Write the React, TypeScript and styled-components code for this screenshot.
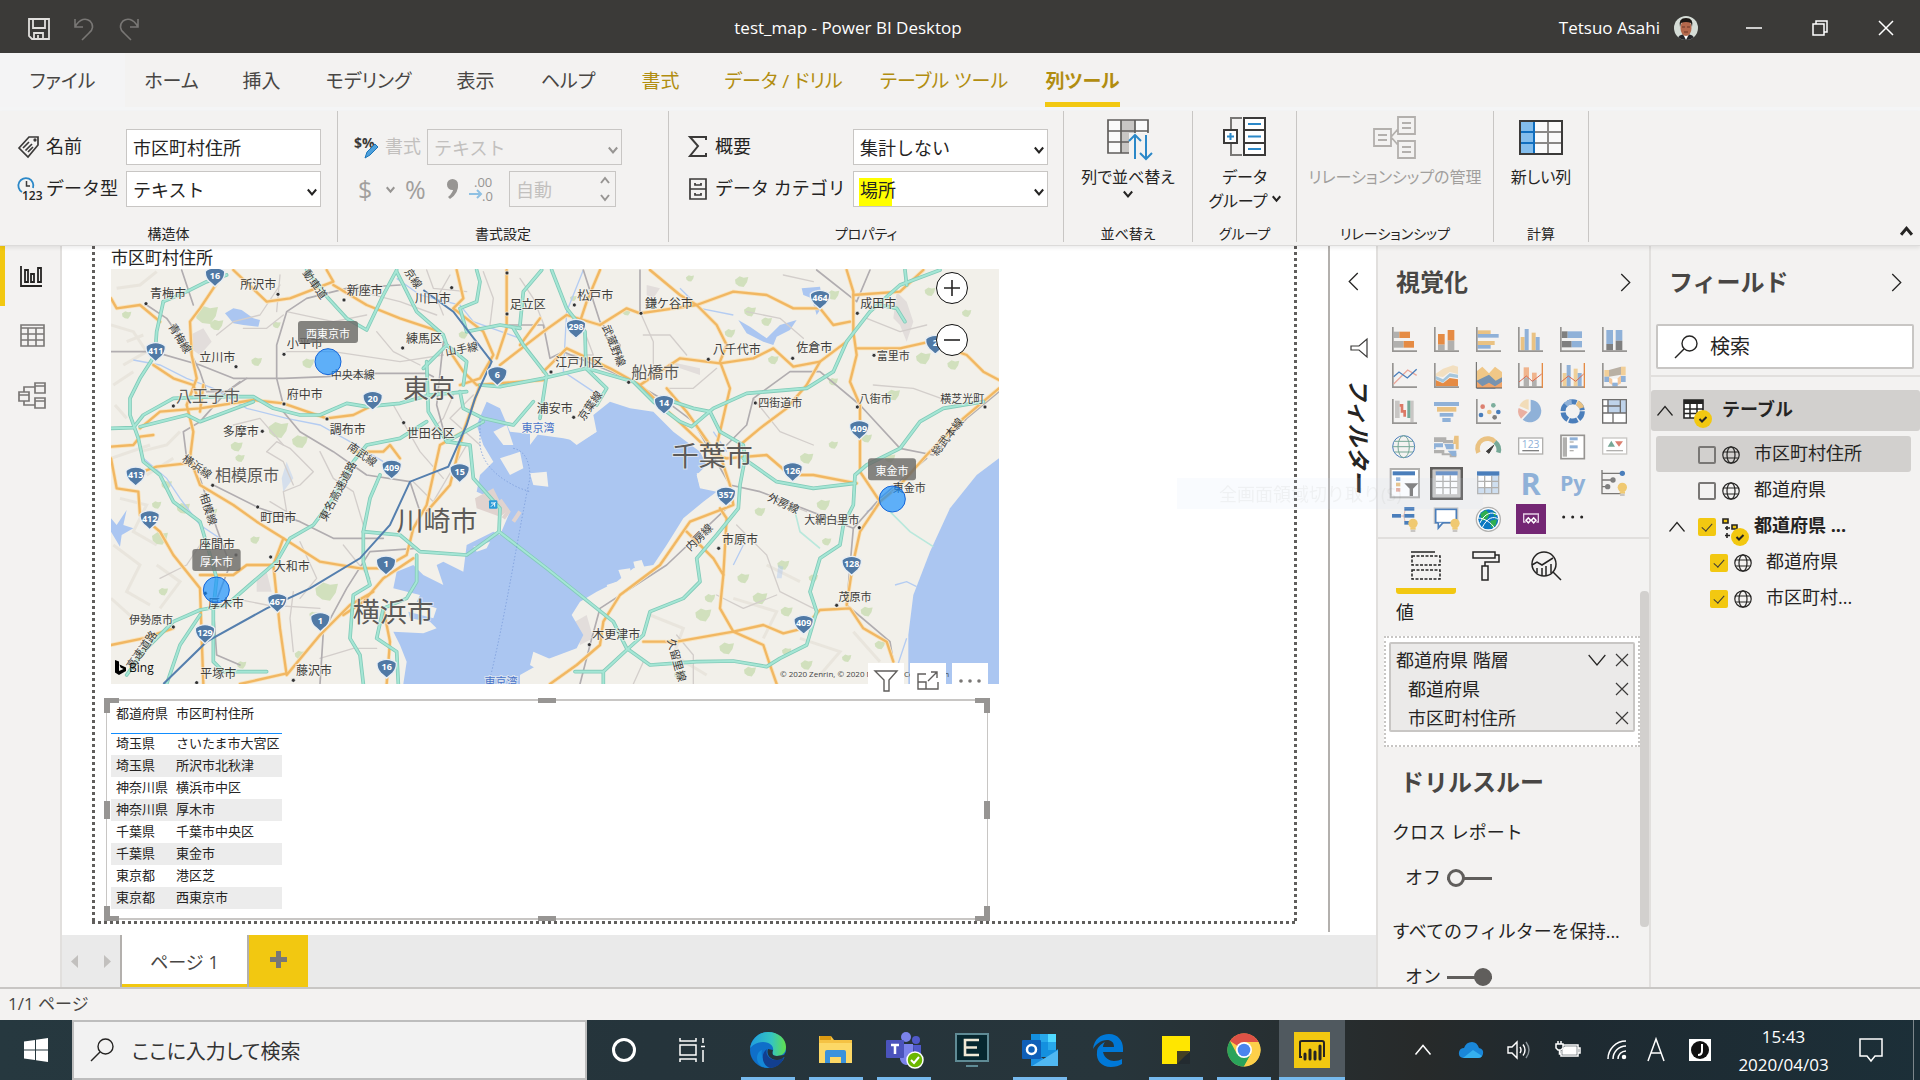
import React from "react";
import styled, { createGlobalStyle, css } from "styled-components";

const Global = createGlobalStyle`
  *, *::after { box-sizing: border-box; }
  html, body { margin: 0; }
  body, button, input, select {
    font-family: "Open Sans", "Noto Sans CJK JP", sans-serif;
    color: #252423;
  }
  button { border: 0; padding: 0; background: none; cursor: pointer; }
  svg { display: block; flex: none; overflow: visible; }
`;

const kana = css`font-feature-settings: "palt";`;

/* ---------- shell ---------- */
const Shell = styled.div`
  display: flex;
  flex-direction: column;
  height: 100vh;
  background: #f3f2f1;
  font-size: 18px;
  overflow: hidden;
`;

const TitleBar = styled.header`
  display: grid;
  grid-template-columns: 1fr auto 1fr;
  align-items: center;
  height: 53px;
  flex: none;
  padding-top: 2px;
  background: #3b3a38;
`;
const TitleText = styled.h1`
  margin: 0;
  padding-right: 224px;
  color: #fff;
  font-size: 17px;
  font-weight: 400;
  line-height: 24px;
`;
const QuickActions = styled.div`
  display: flex;
  gap: 21px;
  padding: 3px 0 0 27px;
`;
const WindowArea = styled.div`
  display: flex;
  align-items: center;
  justify-content: flex-end;
  margin-left: -224px;
`;
const UserName = styled.span`
  color: #fff;
  font-size: 17px;
  line-height: 24px;
  margin-right: 14px;
`;
const WinButton = styled.button`
  display: grid;
  place-items: center;
  width: 66px;
  height: 51px;
`;
const WinButtons = styled.div`
  display: flex;
  margin: 0 1px 0 23px;
`;

const TabBar = styled.nav`
  display: flex;
  height: 58px;
  flex: none;
  border-bottom: 4px solid #f4f5f6;
`;
const RibbonTab = styled.button<{ $w: number; $tone?: "tool" | "active" | "file" }>`
  ${kana}
  display: flex;
  justify-content: center;
  width: ${(p) => p.$w}px;
  padding-top: 13px;
  font-size: 19px;
  line-height: 30px;
  color: ${(p) => (p.$tone === "tool" || p.$tone === "active" ? "#b18d10" : "#484644")};
  font-weight: ${(p) => (p.$tone === "active" ? 700 : 400)};
  background: ${(p) => (p.$tone === "file" ? "#f4f4f5" : "transparent")};
  span {
    height: 41px;
    border-bottom: 5px solid ${(p) => (p.$tone === "active" ? "#f2c811" : "transparent")};
  }
`;

const Ribbon = styled.section`
  display: flex;
  height: 135px;
  flex: none;
  padding-bottom: 3px;
  border-bottom: 1px solid #dcdbda;
  box-shadow: 0 2px 4px rgba(0, 0, 0, 0.08);
  position: relative;
  z-index: 2;
  background: #f3f2f1;
`;
const Group = styled.div<{ $w: number }>`
  display: flex;
  flex-direction: column;
  justify-content: space-between;
  width: ${(p) => p.$w}px;
  border-right: 1px solid #c8c6c4;
`;
const GroupLabel = styled.div`
  ${kana}
  text-align: center;
  font-size: 14px;
  line-height: 16px;
`;
const FieldRows = styled.div<{ $cols: string; $pl: number }>`
  display: grid;
  grid-template-columns: ${(p) => p.$cols};
  grid-auto-rows: 36px;
  row-gap: 6px;
  align-items: center;
  padding: 18px 0 0 ${(p) => p.$pl}px;
`;
const FieldLabel = styled.label<{ $off?: boolean }>`
  font-size: 18px;
  line-height: 24px;
  padding-bottom: 3px;
  white-space: nowrap;
  color: ${(p) => (p.$off ? "#c2c0be" : "#252423")};
`;
const boxCss = css`
  width: 100%;
  height: 36px;
  margin: 0;
  padding: 2px 6px 0;
  border: 1px solid #c8c6c4;
  border-radius: 0;
  background: #fff;
  font-size: 18px;
  line-height: 28px;
  appearance: none;
  &:disabled { background: #f3f2f1; color: #c2c0be; opacity: 1; }
`;
const TextBox = styled.input`
  ${boxCss}
  padding-top: 0;
`;
const SelectBox = styled.select<{ $marked?: boolean }>`
  ${boxCss}
  ${(p) => p.$marked && css`background: linear-gradient(#ff0, #ff0) 5px 6px / 33px 28px no-repeat, #fff;`}
`;
const SelectWrap = styled.div`
  position: relative;
  svg { position: absolute; right: 4px; top: 16px; pointer-events: none; }
`;
const SpinWrap = styled.div`
  position: relative;
  svg { position: absolute; right: 6px; top: 6px; pointer-events: none; }
`;
const FormatTools = styled.div`
  grid-column: 1 / -1;
  display: grid;
  grid-template-columns: 22px 13px 36px 16px 34px 107px;
  column-gap: 6px;
  align-items: center;
  padding-left: 4px;
  color: #a19f9d;
  button { color: #a19f9d; font-size: 25px; line-height: 36px; text-align: left; }
`;
const BigButton = styled.button<{ $off?: boolean }>`
  ${kana}
  display: flex;
  flex-direction: column;
  align-items: center;
  padding-top: 4px;
  font-size: 16px;
  line-height: 24px;
  color: ${(p) => (p.$off ? "#a19f9d" : "#252423")};
  svg:first-child { margin-bottom: 6px; }
`;
const InlineRow = styled.span`
  display: flex;
  align-items: center;
  gap: 4px;
`;
const Collapse = styled.button`
  margin: auto 7px 4px auto;
`;

const Body = styled.main`
  display: flex;
  flex: 1;
  min-height: 0;
  border-bottom: 2px solid #c8c6c4;
`;
const SideNav = styled.nav`
  width: 62px;
  flex: none;
  border-right: 2px solid #e1dfdd;
`;
const SideButton = styled.button<{ $on?: boolean }>`
  display: grid;
  place-items: center start;
  width: 100%;
  height: 60px;
  padding-left: ${(p) => (p.$on ? 13 : 18)}px;
  border-left: ${(p) => (p.$on ? "5px solid #f2c811" : "0")};
`;
const Center = styled.div`
  display: flex;
  flex-direction: column;
  flex: 1;
  min-width: 0;
`;
const CanvasRow = styled.div`
  display: flex;
  flex: 1;
  min-height: 0;
  background: #fff;
`;
const dash = "#605e5c 0 3px, transparent 3px 6px";
const ReportPage = styled.section`
  flex: 1;
  margin: 0 31px 11px 30px;
  padding: 0 0 3px 12px;
  background:
    repeating-linear-gradient(to bottom, ${dash}) left top / 3px 100% no-repeat,
    repeating-linear-gradient(to bottom, ${dash}) right top / 3px 100% no-repeat,
    repeating-linear-gradient(to right, ${dash}) left bottom / 100% 3px no-repeat;
`;
const VisualTitle = styled.h2`
  margin: 0 0 0 7px;
  height: 23px;
  font-size: 17px;
  font-weight: 400;
  line-height: 24px;
`;
const MapVisual = styled.div`
  position: relative;
  width: 888px;
  height: 415px;
  margin-left: 7px;
  > svg { overflow: hidden; }
`;
const ZoomStack = styled.div`
  position: absolute;
  right: 31px;
  top: 3px;
  display: flex;
  flex-direction: column;
  gap: 20px;
`;
const ZoomButton = styled.button`
  display: grid;
  place-items: center;
  width: 32px;
  height: 32px;
  border: 1px solid #111;
  border-radius: 50%;
  background: #fff;
`;
const VisualHeader = styled.div`
  position: absolute;
  right: 11px;
  top: 394px;
  display: flex;
  gap: 6px;
`;
const HeaderButton = styled.button`
  display: grid;
  place-items: center;
  width: 36px;
  height: 36px;
  background: #fff;
`;
const TableVisual = styled.div`
  position: relative;
  width: 886px;
  height: 223px;
  margin-top: 14px;
  padding: 5px 0 0 7px;
  background: linear-gradient(#fff, #fff) 3px 3px / 880px 217px no-repeat, linear-gradient(#c8c6c4, #c8c6c4) 2px 1px / 882px 221px no-repeat;
`;
const Handle = styled.i<{ $v: "top" | "bottom" | "mid"; $h: "left" | "right" | "mid" }>`
  position: absolute;
  width: ${(p) => (p.$v === "mid" ? 6 : p.$h === "mid" ? 18 : 15)}px;
  height: ${(p) => (p.$h === "mid" ? 5 : p.$v === "mid" ? 18 : 15)}px;
  ${(p) => (p.$v === "mid" ? "top: 103px;" : `${p.$v}: 0;`)}
  ${(p) => (p.$h === "mid" ? "left: 434px;" : `${p.$h}: 0;`)}
  border: 0 solid #979593;
  ${(p) => (p.$v === "mid" || p.$h === "mid" ? "background: #979593;" : `border-${p.$v}-width: 5px; border-${p.$h}-width: 6px;`)}
`;
const DataTable = styled.table`
  border-collapse: collapse;
  table-layout: fixed;
  width: 171px;
  font-size: 13px;
  line-height: 18px;
  th { height: 30px; padding: 1px 5px 0; vertical-align: top; text-align: left; font-weight: 400; white-space: nowrap; border-bottom: 1px solid #118dff; }
  td { height: 22px; padding: 0 5px 2px; white-space: nowrap; }
  tbody tr:nth-child(even) td { background: #ececec; }
  th:first-child { width: 60px; }
`;

const FilterPane = styled.aside`
  display: flex;
  flex-direction: column;
  align-items: center;
  width: 48px;
  margin-bottom: 3px;
  border-left: 2px solid #b3b0ad;
  padding-top: 27px;
`;
const FilterBody = styled.div`
  display: flex;
  flex-direction: column;
  align-items: center;
  gap: 20px;
  padding: 48px 0 0 12px;
`;
const FilterTitle = styled.h2`
  writing-mode: vertical-rl;
  text-orientation: sideways;
  margin: 0;
  font-size: 23px;
  line-height: 28px;
  font-style: oblique;
  font-weight: 700;
`;

const PageTabs = styled.nav`
  display: flex;
  height: 52px;
  flex: none;
  background: #eaeaea;
`;
const PageArrows = styled.div`
  display: flex;
  align-items: center;
  gap: 26px;
  width: 58px;
  padding-left: 9px;
`;
const PageTab = styled.button`
  width: 129px;
  border: solid #b3b0ad;
  border-width: 0 2px;
  background: linear-gradient(#f2c811, #f2c811) bottom / 100% 3px no-repeat, #fff;
  color: #484644;
  font-size: 18px;
`;
const AddPage = styled.button`
  display: grid;
  place-items: center;
  width: 59px;
  padding-bottom: 3px;
  background: #f2c811;
`;

/* ---------- right panes ---------- */
const Pane = styled.aside<{ $w: number }>`
  position: relative;
  width: ${(p) => p.$w}px;
  flex: none;
  border-left: 2px solid #e1dfdd;
  overflow: hidden;
`;
const PaneHead = styled.div`
  display: flex;
  align-items: center;
  justify-content: space-between;
  height: 74px;
  padding: 0 15px 2px 18px;
`;
const PaneTitle = styled.h2`
  margin: 0;
  font-size: 24px;
  line-height: 32px;
  font-weight: 700;
  color: #484644;
`;
const VizGrid = styled.div`
  display: grid;
  grid-template-columns: repeat(6, 42px);
  grid-auto-rows: 36px;
  height: 219px;
  padding: 6px 0 0 13px;
  border-bottom: 2px solid #e1dfdd;
`;
const VizButton = styled.button`
  width: 28px;
  height: 28px;
`;
const BuildTabs = styled.div`
  display: flex;
  padding: 12px 0 0 18px;
`;
const BuildTab = styled.button<{ $on?: boolean }>`
  display: flex;
  justify-content: center;
  width: 60px;
  height: 43px;
  border-radius: 3px;
  background: ${(p) => (p.$on ? "linear-gradient(#f2c811, #f2c811) bottom / 100% 6px no-repeat" : "none")};
`;
const WellLabel = styled.h3`
  margin: 5px 0 10px 18px;
  font-size: 18px;
  font-weight: 400;
  line-height: 27px;
`;
const Well = styled.div`
  width: 256px;
  height: 111px;
  margin-left: 6px;
  padding: 4px 3px;
  border: 2px dotted #c8c6c4;
  background: #fff;
`;
const WellBox = styled.ul`
  margin: 0;
  padding: 1px 5px 0;
  height: 90px;
  list-style: none;
  border: 2px solid #c8c6c4;
  border-radius: 2px;
  background: #ebeae9;
`;
const WellItem = styled.li<{ $sub?: boolean }>`
  display: flex;
  align-items: center;
  height: 29px;
  padding-left: ${(p) => (p.$sub ? 12 : 0)}px;
  font-size: 18px;
  line-height: 26px;
  span { flex: 1; }
  button { margin-left: 9px; }
`;
const DrillTitle = styled.h2`
  margin: 18px 0 0 22px;
  font-size: 24px;
  line-height: 34px;
  color: #484644;
`;
const PaneText = styled.p`
  margin: 19px 0 0 14px;
  font-size: 18px;
  line-height: 28px;
  white-space: nowrap;
`;
const ToggleRow = styled.label`
  display: flex;
  align-items: center;
  gap: 6px;
  margin: 17px 0 26px 27px;
  font-size: 18px;
  line-height: 28px;
`;
const Toggle = styled.input`
  appearance: none;
  position: relative;
  width: 45px;
  height: 18px;
  margin: 2px 0 0;
  background: linear-gradient(#605e5c, #605e5c) center / 100% 3px no-repeat;
  &::after {
    content: "";
    position: absolute;
    left: 0;
    width: 18px;
    height: 18px;
    border: 3px solid #605e5c;
    border-radius: 50%;
    background: #f3f2f1;
  }
  &:checked::after { left: 27px; background: #605e5c; }
`;
const ScrollThumb = styled.div`
  position: absolute;
  right: 0;
  top: 345px;
  width: 9px;
  height: 336px;
  border-radius: 4px;
  background: #d2d0ce;
`;
const SearchWrap = styled.label`
  display: flex;
  align-items: center;
  gap: 12px;
  height: 45px;
  margin: 4px 6px 6px 5px;
  padding-left: 16px;
  border: 2px solid #c8c6c4;
  border-radius: 2px;
  background: #fff;
`;
const SearchInput = styled.input`
  flex: 1;
  min-width: 0;
  padding: 0;
  border: 0;
  background: none;
  font-size: 20px;
  line-height: 28px;
  &::placeholder { color: #252423; opacity: 1; }
`;
const Tree = styled.div`
  border-top: 2px solid #e1dfdd;
  padding-top: 13px;
`;
const TableRow = styled.div`
  display: flex;
  align-items: center;
  height: 41px;
  margin-bottom: 5px;
  padding-left: 5px;
  border-radius: 3px;
  background: #d2d0ce;
  font-weight: 700;
  svg + svg { margin: 6px 10px 0 9px; }
  span { padding-bottom: 5px; }
`;
const FieldRow = styled.label<{ $level: 0 | 1; $on?: boolean; $bold?: boolean }>`
  display: flex;
  align-items: center;
  gap: 6px;
  height: 36px;
  margin: 0 9px 0 5px;
  padding-left: ${(p) => (p.$bold ? 12 : p.$level ? 54 : 42)}px;
  border-radius: 3px;
  background: ${(p) => (p.$on ? "#d2d0ce" : "transparent")};
  font-weight: ${(p) => (p.$bold ? 700 : 400)};
  line-height: 26px;
  span { padding: 0 0 3px 8px; }
  svg { margin-top: 2px; }
  > svg:first-child { margin-right: 6px; }
`;
const Check = styled.input`
  appearance: none;
  position: relative;
  flex: none;
  width: 18px;
  height: 18px;
  margin: 2px 0 0;
  border: 2px solid #797775;
  border-radius: 2px;
  &:checked { border-color: #f2c811; background: #f2c811; }
  &:checked::after {
    content: "";
    position: absolute;
    left: 4px;
    top: 1px;
    width: 6px;
    height: 10px;
    border: solid #3b3a39;
    border-width: 0 1px 1px 0;
    transform: rotate(42deg);
  }
`;
const SnipHint = styled.div`
  position: fixed;
  left: 1177px;
  top: 478px;
  width: 306px;
  height: 31px;
  padding-left: 42px;
  background: rgba(205, 225, 250, 0.12);
  color: rgba(90, 80, 70, 0.06);
  font-size: 18px;
  line-height: 32px;
  white-space: nowrap;
  pointer-events: none;
`;

const StatusBar = styled.footer`
  height: 31px;
  flex: none;
  padding-left: 8px;
  color: #484644;
  font-size: 17px;
  line-height: 29px;
`;

/* ---------- taskbar ---------- */
const Taskbar = styled.footer`
  display: flex;
  height: 60px;
  flex: none;
  background: linear-gradient(90deg, #26383f 0, #25343b 34%, #27353b 58%, #272a2a 74%, #1e2a31 82%, #1c2f38 100%);
`;
const StartButton = styled.button`
  display: grid;
  place-items: center;
  width: 72px;
`;
const TaskSearch = styled.label`
  display: flex;
  align-items: center;
  gap: 18px;
  width: 515px;
  margin-right: 3px;
  padding-left: 16px;
  border: 2px solid #bdbdbd;
  background: #f2f2f2;
  input { ${kana} padding-top: 3px; }
  input::placeholder { color: #333; }
`;
const TaskButton = styled.button<{ $open?: boolean; $active?: boolean; $gap?: boolean }>`
  display: grid;
  place-items: center;
  width: 68px;
  margin-left: ${(p) => (p.$gap ? 8 : 0)}px;
  background:
    ${(p) => (p.$open || p.$active ? `linear-gradient(#76b9ed, #76b9ed) bottom / ${p.$active ? 66 : 54}px 3px no-repeat` : "none")}
    ${(p) => (p.$active ? ", linear-gradient(#50595f, #50595f) center / 66px 100% no-repeat" : "")};
`;
const Tray = styled.div`
  display: flex;
  align-items: center;
  margin-left: auto;
  color: #fff;
`;
const TrayButton = styled.button<{ $w: number }>`
  display: grid;
  place-items: center;
  width: ${(p) => p.$w}px;
  height: 60px;
  color: #fff;
`;
const Clock = styled.time`
  width: 111px;
  padding-top: 2px;
  text-align: center;
  font-size: 17px;
  line-height: 28px;
`;
const Edge = styled.i`
  height: 60px;
  width: 7px;
  margin-left: 11px;
  border-left: 1px solid #7c868b;
`;

/* ---------- small glyphs ---------- */
const Chev = ({ d = "down", w = 10, c = "#252423", s = 2 }: { d?: string; w?: number; c?: string; s?: number }) => {
  const paths: Record<string, string> = {
    down: "M1 3 L6 9 L11 3",
    up: "M1 9 L6 3 L11 9",
    left: "M9 0 L3 6 L9 12",
    right: "M3 0 L9 6 L3 12",
  };
  return (
    <svg width={w} height={w} viewBox="0 0 12 12" fill="none" stroke={c} strokeWidth={(s * 12) / w}>
      <path d={paths[d]} />
    </svg>
  );
};
const Cross = () => (
  <svg width="12" height="12" viewBox="0 0 12 12" stroke="#3b3a39" strokeWidth="1.2"><path d="M0 0 12 12M12 0 0 12" /></svg>
);
const Magnifier = ({ size = 24 }: { size?: number }) => (
  <svg width={size} height={size} viewBox="0 0 24 24" fill="none" stroke="#252423" strokeWidth="1.4"><circle cx="15.5" cy="8.5" r="7.5" /><path d="M10 14 1 23" /></svg>
);
const Globe = () => (
  <svg width="18" height="18" viewBox="0 0 18 18" fill="none" stroke="#252423" strokeWidth="1.2">
    <circle cx="9" cy="9" r="8.2" /><ellipse cx="9" cy="9" rx="4" ry="8.2" /><path d="M1.5 6h15M1.5 12h15" />
  </svg>
);

/* ---------- visualization gallery ---------- */
const B = "#8fb1d8", D = "#4a7ebb", Y = "#eac282", O = "#e58b44", G = "#b1b0ae", K = "#7f7f7f";
const Axis = () => <path d="M5.5 3V75.5H78" fill="none" stroke="#979593" strokeWidth="5" />;
const R = ({ x, y, w, h, f }: { x: number; y: number; w: number; h: number; f: string }) => <rect x={x} y={y} width={w} height={h} fill={f} />;
const Bulb = ({ x, y }: { x: number; y: number }) => (
  <g><circle cx={x} cy={y} r="14" fill="#f0c971" /><rect x={x - 8} y={y + 12} width="16" height="7" fill="#f0c971" /><rect x={x - 7} y={y + 19} width="14" height="7" fill="#c8c6c4" /></g>
);
const gallery: [string, React.ReactNode][] = [
  ["積み上げ横棒", <><R x={8} y={17} w={17} h={19} f={G} /><R x={25} y={17} w={32} h={19} f={O} /><R x={8} y={45} w={30} h={20} f={G} /><R x={38} y={45} w={31} h={20} f={O} /><Axis /></>],
  ["積み上げ縦棒", <><R x={15} y={24} w={20} h={32} f={O} /><R x={15} y={56} w={20} h={17} f={G} /><R x={44} y={12} w={20} h={32} f={O} /><R x={44} y={44} w={20} h={29} f={G} /><Axis /></>],
  ["集合横棒", <><R x={8} y={13} w={39} h={11} f={Y} /><R x={8} y={24} w={63} h={11} f={B} /><R x={8} y={45} w={51} h={12} f={Y} /><R x={8} y={57} w={39} h={11} f={B} /><Axis /></>],
  ["集合縦棒", <><R x={11} y={33} w={12} h={40} f={Y} /><R x={23} y={9} w={12} h={64} f={B} /><R x={44} y={20} w={12} h={53} f={Y} /><R x={56} y={33} w={12} h={40} f={B} /><Axis /></>],
  ["100% 横棒", <><R x={8} y={16} w={18} h={20} f={K} /><R x={26} y={16} w={43} h={20} f={B} /><R x={8} y={45} w={30} h={19} f={K} /><R x={38} y={45} w={31} h={19} f={B} /><Axis /></>],
  ["100% 縦棒", <><R x={16} y={12} w={20} h={42} f={B} /><R x={16} y={54} w={20} h={19} f={K} /><R x={44} y={12} w={20} h={32} f={B} /><R x={44} y={44} w={20} h={29} f={K} /><Axis /></>],
  ["折れ線", <><Axis /><path d="M8 66 50 24 77 40" fill="none" stroke="#e9a79a" strokeWidth="4" /><path d="M8 44 24 30 49 48 77 22" fill="none" stroke={D} strokeWidth="4" /></>],
  ["面", <><path d="M8 35 30 20 60 10 75 14V36L50 30 30 45 8 42Z" fill="#f2dfc0" /><path d="M8 42 30 52 50 34 75 38V48L50 44 30 62 8 52Z" fill="#a5c6dc" /><path d="M8 54 30 64 50 48 75 52V73H8Z" fill={O} /><Axis /></>],
  ["積み上げ面", <><path d="M5 28 22 14 42 34 60 14 81 30V73H5Z" fill="#f0c787" /><path d="M5 56 22 48 42 38 62 56 81 46V60L60 80H5Z" fill="#7793b0" /><path d="M5 58 22 73 42 62 60 73 81 60V78H5Z" fill="#f0a56a" /><path d="M4 0V78H81" fill="none" stroke="#605e5c" strokeWidth="3" /></>],
  ["折れ線と積み上げ縦棒", <><R x={20} y={16} w={16} h={30} f="#f0b48d" /><R x={20} y={46} w={16} h={27} f={G} /><R x={45} y={32} w={14} h={22} f="#f0b48d" /><R x={45} y={54} w={14} h={19} f={G} /><Axis /><path d="M76 3V78" stroke={O} strokeWidth="4" /><path d="M6 60 28 42 46 58 74 36" fill="none" stroke="#dc6a50" strokeWidth="3" /></>],
  ["折れ線と集合縦棒", <><R x={11} y={33} w={12} h={40} f="#f0cf98" /><R x={23} y={9} w={12} h={64} f={B} /><R x={44} y={20} w={12} h={53} f="#f0cf98" /><R x={56} y={33} w={12} h={40} f={B} /><Axis /><path d="M76 3V78" stroke={O} strokeWidth="4" /><path d="M6 60 28 42 50 58 74 36" fill="none" stroke="#dc6a50" strokeWidth="3" /></>],
  ["リボン", <><R x={10} y={24} w={14} h={20} f="#f2cf98" /><R x={10} y={44} w={14} h={16} f={B} /><path d="M24 24 60 14V38L24 44Z" fill="#b9b0a4" /><path d="M24 46 42 56 60 40V64L42 74 24 62Z" fill="#f5c89c" /><R x={34} y={50} w={16} h={14} f="#fff" /><R x={34} y={62} w={16} h={12} f={B} /><R x={60} y={14} w={14} h={26} f="#f2cf98" /><R x={60} y={42} w={14} h={18} f={B} /><Axis /></>],
  ["ウォーターフォール", <><R x={12} y={8} w={14} h={52} f="#c8c6c4" /><R x={58} y={8} w={10} h={64} f="#c8c6c4" /><path d="M26 22H33V40H41V56" fill="none" stroke="#dc7a66" strokeWidth="8" /><R x={49} y={8} w={9} h={52} f="#76a897" /><Axis /></>],
  ["じょうご", <><R x={3} y={12} w={75} h={12} f={B} /><R x={12} y={27} w={58} h={14} f={Y} /><R x={20} y={45} w={41} h={11} f={B} /><R x={28} y={60} w={25} h={12} f={B} /></>],
  ["散布図", <><Axis /><circle cx="23" cy="26" r="7" fill="#dc8070" /><circle cx="55" cy="22" r="7" fill="#7cae9d" /><circle cx="43" cy="42" r="7" fill={Y} /><circle cx="70" cy="42" r="7" fill={D} /><circle cx="18" cy="51" r="7" fill={D} /><circle cx="59" cy="58" r="7" fill={K} /></>],
  ["円", <><path d="M41 39V5A34 34 0 1 1 17 65Z" fill={B} /><path d="M35 36V4A32 32 0 0 0 7 24Z" fill="#f2dcb8" /><path d="M32 42 5 30A32 32 0 0 0 12 62Z" fill="#eab0a2" /></>],
  ["ドーナツ", <g fill="none" strokeWidth="15"><circle cx="41" cy="40" r="29" stroke={D} strokeDasharray="26 4.36" /><path d="M20 20A29 29 0 0 1 38 11" stroke={B} /><path d="M54 14A29 29 0 0 1 68 30" stroke={Y} /></g>],
  ["ツリーマップ", <><R x={5} y={5} w={72} h={70} f="#fff" /><R x={20} y={5} w={57} h={40} f="#bfd3ea" /><path d="M5 5H76V75H5ZM5 45H76M21 5V45M21 24H58V5M58 24V45M36 45V75M5 24H21" fill="none" stroke="#6f6e6d" strokeWidth="4" /></>],
  ["マップ", <g fill="none" strokeWidth="3"><circle cx="38" cy="38" r="33" stroke={D} /><ellipse cx="38" cy="38" rx="17" ry="33" stroke="#76a897" /><path d="M5 38H71M10 22H66M10 54H66" stroke="#76a897" /></g>],
  ["塗り分け地図", <><path d="M3 10H40V18H60V28H30V24H3Z" fill={G} /><path d="M3 28H30V40H8V46H3Z" fill={B} /><path d="M64 5H77V46H68V30H60Z" fill={Y} /><path d="M34 30H62V46H40Z" fill={B} /><path d="M3 48H34V58H70V70H50V64H26V58H3Z" fill={G} /><path d="M44 50H70V66H58Z" fill={B} /></>],
  ["ゲージ", <><path d="M10 56A30 30 0 0 1 60 24" fill="none" stroke={Y} strokeWidth="14" /><path d="M60 24A30 30 0 0 1 70 56" fill="none" stroke="#76a897" strokeWidth="14" /><path d="M34 52 56 34 42 58Z" fill="#3b3a39" stroke="#3b3a39" strokeWidth="3" /></>],
  ["カード", <><rect x="5" y="12" width="72" height="48" fill="#fff" stroke={G} strokeWidth="4" /><text x="41" y="41" fontSize="31" textAnchor="middle" fill={B}>123</text><R x={16} y={48} w={50} h={4} f={K} /></>],
  ["複数の行カード", <><rect x="6" y="4" width="70" height="70" fill="#fff" stroke="#979593" strokeWidth="5" /><R x={11} y={10} w={13} h={58} f={G} /><R x={32} y={10} w={24} h={9} f={B} /><R x={32} y={22} w={12} h={4} f={G} /><R x={32} y={34} w={24} h={9} f={B} /><R x={32} y={48} w={12} h={4} f={G} /></>],
  ["KPI", <><rect x="5" y="12" width="72" height="48" fill="#fff" stroke="#c8c6c4" strokeWidth="4" /><path d="M20 38 31 20 42 38Z" fill="#76a897" /><path d="M42 22H66L54 38Z" fill="#dc8070" /><R x={16} y={48} w={50} h={4} f={G} /></>],
  ["スライサー", <><rect x="-1" y="-3" width="85" height="85" fill="#fff" stroke={G} strokeWidth="6" /><R x={5} y={4} w={67} h={12} f={D} /><R x={15} y={22} w={13} h={11} f={B} /><R x={15} y={38} w={13} h={11} f={Y} /><R x={15} y={54} w={13} h={11} f="#eab0a2" /><path d="M40 40H82L66 56V78H56V56Z" fill="#797775" /></>],
  ["テーブル", <><rect x="-5" y="-5" width="91" height="91" fill="#fff" stroke="#605e5c" strokeWidth="8" /><rect x="4" y="4" width="73" height="73" fill="none" stroke="#c8c6c4" strokeWidth="9" /><R x={8} y={4} w={66} h={12} f="#6d94c8" /><path d="M8 34H74M8 53H74M30 16V73M52 16V73" stroke={G} strokeWidth="4" /></>],
  ["マトリックス", <><R x={7} y={5} w={65} h={67} f="#fff" /><R x={7} y={52} w={65} h={20} f="#cfdff0" /><R x={50} y={17} w={22} h={55} f="#cfdff0" /><path d="M8 17V71H71V17M8 34H71M8 53H71M29 17V71M50 17V71" stroke={G} strokeWidth="4" fill="none" /><R x={6} y={4} w={67} h={13} f={D} /></>],
  ["R スクリプト", <text x="41" y="76" fontSize="92" fontWeight="700" textAnchor="middle" fill={B}>R</text>],
  ["Python", <text x="41" y="62" fontSize="64" fontWeight="700" textAnchor="middle" fill={B}>Py</text>],
  ["主要なインフルエンサー", <><path d="M3 0V71H60M3 10H60M3 30H34M3 50H18" fill="none" stroke="#797775" strokeWidth="4" /><circle cx="64" cy="10" r="8" fill={D} /><circle cx="36" cy="30" r="8" fill={K} /><circle cx="20" cy="50" r="8" fill={K} /><Bulb x={64} y={52} /></>],
  ["分解ツリー", <><path d="M28 30H38M38 30C44 10 40 10 50 8M38 30C44 50 40 50 50 50" fill="none" stroke="#dcb7b0" strokeWidth="3" /><R x={3} y={24} w={27} h={11} f={D} /><R x={40} y={3} w={30} h={11} f={D} /><R x={40} y={24} w={30} h={11} f={D} /><R x={40} y={45} w={16} h={11} f={D} /><Bulb x={66} y={52} /></>],
  ["Q&A", <><rect x="2" y="4" width="74" height="50" fill="#c8c6c4" /><rect x="8" y="10" width="62" height="40" fill="#fff" stroke={D} strokeWidth="5" /><path d="M16 50V66L30 50" fill="#fff" stroke={D} strokeWidth="5" /><Bulb x={66} y={52} /></>],
  ["ArcGIS", <><circle cx="40" cy="40" r="36" fill="#fff" stroke={G} strokeWidth="4" /><circle cx="40" cy="40" r="30" fill="#0b78c2" /><path d="M16 24 32 12 44 24 36 40 22 44ZM46 44 66 40 62 58 48 66ZM54 14 64 26 58 32Z" fill="#2fae4f" /><path d="M14 52C30 20 50 16 66 26M22 64C36 36 56 28 70 40M10 36C26 36 50 50 58 66" stroke="#fff" strokeWidth="3" fill="none" /></>],
  ["Power Apps", <><rect x="-3" y="-6" width="90" height="90" fill="#742774" /><path d="M26 48H20V24H64V48H58" fill="none" stroke="#e5cfe5" strokeWidth="4" /><path d="M34 32 44 43 34 54 24 43ZM50 32 60 43 50 54 40 43Z" fill="#fff" /><path d="M34 39 38 43 34 47 30 43ZM50 39 54 43 50 47 46 43Z" fill="#742774" /></>],
  ["その他", <g fill="#252423"><circle cx="14" cy="33" r="4.5" /><circle cx="41" cy="33" r="4.5" /><circle cx="68" cy="33" r="4.5" /></g>],
];

/* ---------- map ---------- */
const teal = [
  "333,550 400,548 430,510 520,460 640,455 760,455 820,490 900,510 960,510 1040,475 1100,485 1200,475 1290,450 1400,440",
  "490,170 470,260 465,330 420,400 390,460 390,510 415,580 430,650 480,690 520,770 600,830 630,930 650,1000 640,1090",
  "490,170 560,140 620,110 680,90", "920,75 985,160 1040,220 1100,255 1150,150 1190,75",
  "380,1290 430,1220 520,1130 600,1095 680,1080 760,1010 830,950 870,880 940,840 1000,760 1060,650 1100,600 1200,580 1280,530",
  "1280,350 1285,500 1340,590 1410,600 1420,700 1500,790 1497,860 1640,970 1790,1090 1840,1130 1880,1210 1950,1260 2090,1250 2200,1248 2300,1265 2340,1240 2420,1200 2450,1100 2430,1040 2460,940 2520,900 2530,840 2560,780 2565,690 2600,660 2700,610 2760,530 2830,490 2950,470",
  "1540,250 1570,300 1640,390 1620,520", "1560,240 1570,140 1625,75", "1655,75 1700,190 1755,260 1758,370 1820,430 1790,480",
  "1440,420 1500,425 1630,400 1760,370 1900,410 1960,470 2040,530 2075,545 2140,490 2240,445 2420,430 2500,380 2540,290 2610,200 2700,120 2820,75",
  "2020,470 2080,490 2130,500 2160,560 2230,600 2235,640 2220,720 2215,790 2150,870 2090,940 2100,1010 2050,1060 1950,1100 1930,1170 1880,1215 1810,1280 1810,1317",
  "2230,640 2330,710 2440,730 2565,715", "1090,860 1200,870 1260,920 1400,930 1497,860", "1140,690 1110,760 1090,860 1090,950 1110,1020 1060,1050 1050,1180 1080,1230 1090,1317",
  "500,1317 540,1200 600,1110", "640,1090 640,1250 670,1280 800,1280", "1725,1280 1810,1280", "1190,80 1250,200 1330,270 1340,300 1270,370",
  "1430,75 1440,110 1430,170 1380,190 1400,260 1500,240 1560,250", "2715,75 2720,120", "1250,930 1250,1010 1220,1060 1150,1090 1130,1180 1190,1220 1195,1317",
  "1380,440 1390,490 1450,520 1540,540 1600,470", "1340,590 1450,530", "420,545 560,510 600,530 760,470", "2640,180 2690,190 2715,230", "1390,420 1400,350 1340,300",
];
const orange = [
  "333,160 350,190 420,180 480,230", "460,360 520,400 580,420 590,450",
  "660,100 600,190 570,230 575,330 590,400 560,480 580,560 570,640 600,720 700,780 770,830 850,880 960,950 1080,970 1150,970 1220,930 1240,850 1280,780 1320,600 1390,560",
  "700,75 800,170 870,160 1000,110 980,75", "1000,120 1100,180 1200,220 1320,260", "420,550 480,500 600,490 760,465 850,475 980,520 1060,510 1120,480",
  "333,605 400,600 420,575 460,570", "400,690 470,665 560,655", "333,640 350,730 415,740 420,810 480,860 520,930 600,1030 610,1317",
  "600,990 700,990 740,960 820,960 850,880", "820,960 840,1150 860,1290 960,1170 1050,1080 1120,1040", "720,1317 860,1285", "333,1200 430,1180 520,1150",
  "1370,75 1390,160 1360,190 1450,260 1480,330 1440,400 1380,420", "1350,320 1390,380 1430,420 1630,405", "1440,420 1390,560 1350,720 1280,800", "1060,620 1150,620 1170,600 1200,640",
  "1950,75 2040,150 2090,180 2150,240 2180,300 2160,350 2190,430 2160,560 2150,600 2190,720", "2090,180 2200,140 2300,150 2380,190 2460,190 2500,240 2550,230",
  "1500,360 1630,260 1700,210 1800,240 1880,190 1920,205 2090,180", "1630,380 1700,310 1830,370 1920,420 2040,340 2160,355 2260,340 2320,310 2380,365 2460,350 2540,290",
  "1920,420 2100,590 2140,630 2180,640 2300,630 2370,690 2440,690 2570,715", "2190,720 2200,780 2070,830 1980,960 1860,1050 1810,1130 1800,1200 1730,1260 1650,1317",
  "2060,860 2140,940 2170,990 2180,820 2160,790", "2170,990 2160,1090 2200,1160 2290,1200 2310,1260 2330,1317",
  "1930,1190 2030,1190 2200,1160 2290,1140 2350,1165 2410,1150 2460,1095 2550,1090 2590,1150 2660,1190 2680,1250",
  "2540,75 2560,140 2560,260 2570,330 2550,410 2580,480 2580,680 2640,770 2580,860 2560,950 2540,1080", "2640,770 2700,720 2780,630 2890,520 2997,430",
  "2570,310 2700,310 2790,290 2900,330 2950,380 2997,405", "2560,150 2700,140 2770,75", "2220,600 2280,550 2360,490 2420,420 2460,350", "1520,75 1520,250 1490,340",
  "1030,1110 1090,1070 1150,1000 1240,940", "1560,300 1620,220", "1740,230 1760,170 1800,75", "1150,1090 1170,1190 1160,1317", "2000,430 2060,500 2130,600", "600,500 610,420",
];
const rail = [
  "333,320 460,320 600,360 700,400 850,400 980,395 1130,385 1280,385 1300,395", "440,180 500,220 570,320 600,380 620,440 680,440 720,410", "545,75 580,180",
  "850,480 830,400 830,300 860,200 920,160 1040,130 1200,120", "850,500 900,560 1000,620 1100,690 1230,710 1260,800", "560,640 550,560 600,530 680,440 740,400",
  "640,720 780,790 900,830 1000,880 1150,880", "600,700 650,850 690,960 640,1090 650,1230 720,1260", "1330,290 1310,480 1340,590", "960,1317 970,1160 1040,1030 1110,920 1250,910",
  "1750,75 1800,230 1860,300 1850,360", "1920,75 1920,200", "1500,240 1630,240 1650,340 1690,320", "1690,320 1880,400 2000,470 2080,530 2190,720 2280,740 2460,810 2560,850 2640,760 2780,640",
  "2190,780 2000,960 1800,1090 1770,1200 1740,1317", "2180,600 2240,540 2260,460 2370,380 2460,380 2580,480 2700,610 2800,630 2900,520 2997,440", "2450,75 2570,170 2610,75", "2560,850 2540,1080 2670,1190 2680,1250",
];
const minor = [
  "860,320 1000,320 1200,350 1330,330", "1040,130 1200,170 1310,210", "860,200 1000,230 1100,210", "1240,710 1300,770 1400,600", "1920,200 1960,290 1960,400", "1030,900 1110,1000",
  "800,620 830,590 870,610 900,640 940,680 900,720 850,740 860,800 810,770", "800,620 850,650 880,720", "1330,210 1310,160 1350,90", "1180,480 1260,620 1330,700", "700,540 780,520 850,600",
  "730,250 800,250 850,210", "650,270 700,230 780,210 840,120", "840,90 830,200", "1130,260 1180,320 1260,360", "1280,75 1300,130 1400,140", "1450,80 1480,160 1470,240", "1560,100 1600,160 1640,260",
  "880,1040 870,1120 880,1220", "700,1060 800,1080 960,1090", "960,1240 1060,1210 1130,1210", "2000,430 2080,430 2150,370", "1930,270 2010,270 2060,330", "2260,460 2340,560 2440,600", "2320,760 2420,800",
  "2210,840 2300,930 2340,1040 2440,1090", "2240,200 2340,220 2410,280", "2600,220 2700,260 2780,240", "2620,420 2740,430 2850,470", "2350,90 2440,110", "1750,250 1780,330 1700,330", "960,620 1000,700 1060,740 1090,840",
  "480,1000 560,960 600,900", "900,890 950,1000 900,1060", "2030,1170 2080,1230 2080,1317", "1930,1250 1900,1317", "2150,1050 2230,1090 2330,1050", "1360,450 1330,520 1290,560", "1420,450 1350,520 1440,600",
];
const shields: [string, number, number][] = [
  ["16", 645, 95], ["411", 467, 320], ["413", 407, 693], ["412", 449, 824], ["20", 1118, 466], ["409", 1175, 672], ["6", 1492, 392], ["15", 1379, 683], ["1", 1158, 960], ["467", 832, 1073],
  ["1", 961, 1130], ["129", 615, 1166], ["16", 1160, 1270], ["298", 1728, 250], ["464", 2460, 163], ["14", 1992, 478], ["409", 2578, 554], ["126", 2378, 680], ["357", 2178, 753], ["128", 2555, 961], ["409", 2411, 1138], ["2", 2806, 298],
];
const places: [string, number, number, number, number?, string?][] = [
  ["青梅市", 504, 146, 12], ["所沢市", 775, 119, 12], ["新座市", 1094, 136, 12], ["川口市", 1298, 160, 12], ["小平市", 914, 297, 12], ["練馬区", 1272, 281, 12], ["立川市", 652, 338, 12],
  ["中央本線", 1058, 391, 11], ["府中市", 914, 450, 12], ["八王子市", 624, 455, 16], ["東京", 1287, 430, 26], ["多摩市", 722, 559, 12], ["調布市", 1043, 553, 12], ["世田谷区", 1292, 565, 12],
  ["相模原市", 741, 691, 16], ["川崎市", 1311, 829, 27], ["町田市", 835, 818, 12], ["座間市", 651, 899, 12], ["大和市", 875, 965, 12], ["厚木市", 678, 1077, 12], ["横浜市", 1180, 1103, 27],
  ["伊勢原市", 453, 1124, 11], ["藤沢市", 942, 1277, 12], ["平塚市", 655, 1287, 12], ["足立区", 1583, 180, 12], ["松戸市", 1786, 152, 12], ["鎌ケ谷市", 2007, 175, 12], ["成田市", 2635, 175, 12],
  ["八千代市", 2210, 315, 12], ["佐倉市", 2443, 309, 12], ["富里市", 2680, 333, 11], ["江戸川区", 1738, 354, 12], ["船橋市", 1966, 382, 16], ["浦安市", 1664, 490, 12], ["四街道市", 2341, 473, 11],
  ["八街市", 2626, 461, 11], ["横芝光町", 2887, 461, 11], ["千葉市", 2137, 633, 27], ["東金市", 2728, 730, 11], ["大網白里市", 2495, 826, 11], ["市原市", 2220, 883, 12], ["茂原市", 2565, 1056, 11], ["木更津市", 1849, 1169, 12],
  ["東京湾", 1614, 548, 11, 0, "#4a74c9"], ["東京湾", 1503, 1312, 11, 0, "#4a74c9"],
  ["青梅線", 540, 280, 11, 58], ["動車道", 945, 118, 11, 55], ["京線", 1240, 100, 11, 55], ["山手線", 1385, 312, 11, -10], ["横浜線", 591, 665, 11, 35], ["相模線", 625, 792, 11, 72], ["南武線", 1087, 628, 11, 35],
  ["東名高速道路", 1013, 738, 11, -62], ["高速道路", 425, 1215, 11, -55], ["武蔵野線", 1842, 302, 11, 68], ["京葉線", 1770, 482, 11, -55], ["外房線", 2350, 775, 11, 25], ["内房線", 2097, 877, 11, -45],
  ["総武本線", 2842, 575, 11, -52], ["久留里線", 2030, 1245, 11, 75],
];
const dots = [[438, 176], [834, 148], [1032, 165], [1355, 128], [1208, 309], [852, 328], [708, 365], [852, 477], [520, 483], [981, 522], [787, 559], [1211, 533], [638, 721], [773, 786], [812, 936], [520, 1146], [590, 1313], [880, 1306], [1521, 84], [1521, 207], [1723, 180], [1923, 205], [2572, 205], [2125, 343], [2378, 340], [2622, 331], [1653, 381], [1886, 412], [1721, 517], [2266, 474], [2572, 486], [2955, 486], [2578, 848], [2156, 910], [2510, 1081], [1768, 1199], [708, 930], [616, 1045]];
const woods = [[620, 210, 34], [650, 240, 20], [770, 350, 16], [925, 355, 18], [710, 605, 18], [835, 555, 30], [900, 590, 24], [720, 640, 14], [500, 720, 16], [480, 880, 24], [550, 790, 20], [640, 800, 12], [765, 885, 14], [980, 1040, 34], [490, 1040, 14], [940, 1110, 12], [380, 210, 14], [470, 780, 14], [900, 1230, 16], [725, 1260, 14], [1390, 270, 14], [830, 240, 12], [2225, 110, 20], [2250, 200, 18], [2190, 265, 16], [2500, 150, 18], [2770, 340, 22], [2860, 360, 18], [2900, 205, 14], [2300, 230, 16], [2320, 345, 16], [2500, 410, 14], [2680, 450, 20], [2600, 580, 16], [2500, 600, 14], [2420, 640, 20], [2470, 780, 20], [2280, 800, 16], [2350, 960, 18], [2480, 890, 14], [2110, 1110, 24], [2230, 1000, 18], [2280, 1060, 22], [2130, 1060, 16], [2360, 1100, 18], [2440, 1000, 14], [2040, 1290, 18], [2180, 1210, 22], [2250, 1280, 18], [2420, 1260, 18], [2360, 1220, 14], [2600, 1100, 18], [2640, 1200, 16], [1880, 200, 14], [2070, 100, 12], [2790, 140, 16], [2540, 1240, 14], [2670, 640, 16], [1720, 160, 10]];
const Lines = ({ list, c, w }: { list: string[]; c: string; w: number }) => (
  <g fill="none" stroke={c} strokeWidth={w} strokeLinejoin="round" strokeLinecap="round">{list.map((p) => <polyline key={p} points={p} />)}</g>
);
const mx = (v: number) => (v - 333) / 3;
const my = (v: number) => (v - 72) / 3;
const pins: [string, number, number, number, number, number][] = [
  ["西東京市", 984, 350, 894, 228, 180], ["厚木市", 649, 1035, 577, 912, 145], ["東金市", 2677, 762, 2604, 640, 144],
];
const MapArt = () => (
  <svg width="888" height="415" viewBox="0 0 888 415" role="img" aria-label="市区町村住所の地図">
    <rect width="888" height="415" fill="#f2f0ea" />
    <g transform="scale(.33333) translate(-333 -72)">
      <g fill="none" stroke="#e6e2da" strokeWidth="9" opacity=".8">
        <path d="M333 240 400 260 440 320 370 360M340 420 400 380M345 480 380 520M333 640 450 600M360 760 440 780 400 860 470 900M340 900 420 960 380 1040 450 1080M470 960 540 1010 480 1090M333 1060 400 1120M350 130 420 120 470 80M380 290 430 270M420 620 500 600 540 560M440 690 520 640" />
        <path d="M1950 1110 2050 1150 2020 1230 2120 1290M2200 1060 2330 1100 2290 1180M2400 1180 2520 1220 2460 1290M2300 960 2400 1010M2560 1160 2640 1250" />
      </g>
      <g fill="#d1e0bd">{woods.map(([x, y, r]) => <path key={`${x}-${y}`} d={`M${x - r} ${y - r * 0.3}l${r * 0.7} ${-r * 0.5} ${r * 0.6} ${r * 0.2} ${r * 0.7} ${-r * 0.1} ${-r * 0.2} ${r * 0.8} ${-r * 0.5} ${r * 0.7} ${-r * 0.7} ${-r * 0.1} ${-r * 0.5} ${-r * 0.4}z`} />)}</g>
      <g fill="#e2dddb"><path d="M570 270 610 250 635 290 600 330 570 310ZM770 1000 800 980 815 1040 770 1040ZM1940 120 1980 130 1960 160 1940 150ZM2690 140 2720 170 2740 230 2720 290 2700 240 2680 220ZM2010 350 2100 370 2100 390 2040 370ZM1725 1130 1760 1110 1780 1180 1740 1200Z" /></g>
      <g fill="#abc6f1">
        <path d="M1210 1317 1220 1250 1200 1200 1180 1160 1270 1165 1310 1150 1290 1130 1230 1120 1225 1100 1300 1120 1310 1090 1250 1070 1260 1050 1180 1030 1190 980 1240 960 1270 990 1330 1020 1310 960 1330 950 1390 980 1400 900 1480 860 1500 870 1530 800 1500 770 1430 740 1440 690 1480 650 1450 600 1430 540 1460 470 1500 490 1530 560 1620 570 1690 580 1740 590 1790 560 1780 510 1830 470 1890 490 1960 500 2020 560 2060 590 2100 620 2120 660 2090 690 2100 730 2150 740 2110 770 2050 820 2000 900 1960 960 1900 970 1850 1010 1790 1040 1740 1070 1715 1110 1750 1170 1730 1210 1650 1240 1560 1290 1570 1317Z" />
        <path d="M2997 640 2930 690 2850 790 2790 920 2740 1050 2725 1170 2725 1317 2997 1317Z" />
        <path d="M675 205 700 190 725 195 760 220 780 225 775 245 730 240 700 235ZM333 820 350 840 380 795 370 840 400 850 365 870 360 905 333 860Z" />
        <path d="M2215 225 2250 245 2300 280 2340 240 2390 225 2370 255 2330 275 2320 300 2290 290 2240 265ZM2405 130 2460 125 2470 180 2450 210 2435 160 2410 150Z" />
        <path d="M2335 960 2350 965 2345 1000 2330 1000ZM860 650 880 700 850 740 845 700Z" opacity=".4" />
      </g>
      <g fill="#f2f0ea">
        <path d="M1500 640 1560 620 1570 670 1530 690ZM1590 685 1640 680 1645 725 1600 720ZM2090 685 2140 680 2150 720 2100 725ZM1855 975 1890 970 1900 1010 1870 1015ZM1900 950 1925 945 1940 985 1910 990ZM1820 1020 1850 1010 1860 1040 1830 1045ZM1600 1220 1670 1250 1640 1290 1590 1260ZM1560 1290 1610 1310 1600 1317 1560 1317ZM1480 560 1520 540 1540 600 1510 600ZM1420 905 1470 890 1460 910 1430 920Z" />
        <path d="M1680 560 1750 530 1790 560 1730 600ZM1590 560 1600 540 1620 560 1590 600Z" />
      </g>
      <path d="M1425 760 1480 730 1500 770 1520 800 1500 815 1430 790Z" fill="#e0d3cf" />
      <path d="M1500 765 1525 800 1510 820M1540 830 1560 800" stroke="#e0d3cf" strokeWidth="12" fill="none" />
      <g fill="none" stroke="#b4ccf2" strokeWidth="4">
        <path d="M400 345 480 360 560 400 640 430 740 490 860 520 960 540 1050 590 1150 650M430 640 500 700 540 760 600 840 660 880M1190 100 1260 150 1380 180 1420 230 1560 280M1750 75 1700 200 1690 380 1780 440M2040 130 2100 190 2200 210M2140 560 2180 620M2640 780 2600 800M2685 1020 2720 1010 2750 1025M2230 900 2200 960M2690 1270 2720 1180" />
      </g>
      <Lines list={minor} c="#d3cecb" w={4} />
      <Lines list={rail} c="#b1adb0" w={5} />
      <Lines list={orange} c="#f9e2ba" w={12} />
      <Lines list={orange} c="#f1b762" w={7} />
      <Lines list={teal} c="#83cbb9" w={11} />
      <Lines list={teal} c="#a5e6d5" w={6} />
      <path d="M2385 800 2400 860 2460 910M2670 800 2730 860 2800 905" fill="none" stroke="#b9e8dc" strokeWidth="5" />
      <polyline points="490,1317 620,1190 800,1090 930,1030 1080,940 1170,840 1230,710 1345,665 1400,540 1425,460 1475,350 1360,200 1270,135" fill="none" stroke="#557fae" strokeWidth="6" />
      <path d="M1440 520V600Q1450 680 1560 730L1590 740M1470 1300Q1500 1180 1540 960T1590 700Q1590 620 1540 610" fill="none" stroke="#7d9fdc" strokeWidth="3" strokeDasharray="4 6" />
      {dots.map(([x, y]) => <circle key={`${x}_${y}`} cx={x} cy={y} r="6" fill="#333" stroke="#fff" strokeWidth="2" />)}
      {shields.map(([n, x, y]) => (
        <path key={`${n}${x}`} transform={`translate(${x} ${y})`} d="M-16 -24Q0 -30 16 -24Q24 -22 29 -16Q30 2 18 14Q8 22 0 30Q-8 22 -18 14Q-30 2 -29 -16Q-24 -22 -16 -24Z" fill="#5079a5" stroke="#e8eef4" strokeWidth="4" />
      ))}
      <rect x="1467" y="766" width="25" height="25" rx="3" fill="#2b9bd8" /><path d="M1473 785 1487 771M1473 774H1484V785" stroke="#fff" strokeWidth="3" fill="none" />
    </g>
    <g fontSize="9" fontWeight="700" fill="#fff" textAnchor="middle">
      {shields.map(([n, x, y]) => <text key={`${n}${x}`} x={mx(x)} y={my(y) + 2}>{n}</text>)}
    </g>
    <g textAnchor="middle" stroke="#f6f4ef" strokeWidth="2" strokeOpacity=".6" paintOrder="stroke">
      {places.map(([n, x, y, s, r = 0, c]) => (
        <text key={`${n}${x}`} fontSize={s} fill={c ?? (s > 12 ? "#5c5a58" : "#403e3c")} transform={`translate(${mx(x)} ${my(y)}) rotate(${r})`} y={s * 0.36}>{n}</text>
      ))}
    </g>
    <text x="669" y="408" fontSize="8" fill="#444">© 2020 Zenrin, © 2020 Microsoft Corporation</text>
    <path d="M4 391 8 392.5V402L12.5 400 9.5 398.5 8.5 395.5 15 398.5V402L8 406 4 403.5Z" />
    <text x="18" y="403" fontSize="12" fill="#111">Bing</text>
    {pins.map(([n, cx, cy, bx, by, bw]) => (
      <g key={n}>
        <circle cx={mx(cx)} cy={my(cy)} r="13" fill="#118dff" fillOpacity=".66" stroke="#1565d8" />
        <rect x={mx(bx)} y={my(by)} width={bw / 3} height="22" rx="3" fill="#6b6a68" fillOpacity=".82" />
        <text x={mx(bx) + bw / 6} y={my(by) + 17} fontSize="11" textAnchor="middle" fill="#fff">{n}</text>
      </g>
    ))}
  </svg>
);

const tableRows = [
  ["埼玉県", "さいたま市大宮区"], ["埼玉県", "所沢市北秋津"], ["神奈川県", "横浜市中区"], ["神奈川県", "厚木市"],
  ["千葉県", "千葉市中央区"], ["千葉県", "東金市"], ["東京都", "港区芝"], ["東京都", "西東京市"],
];
const tabs: [string, number, ("tool" | "active" | "file")?][] = [
  ["ファイル", 125, "file"], ["ホーム", 93], ["挿入", 87], ["モデリング", 127], ["表示", 87], ["ヘルプ", 98],
  ["書式", 87, "tool"], ["データ / ドリル", 159, "tool"], ["テーブル ツール", 162, "tool"], ["列ツール", 115, "active"],
];

export default function App() {
  return (
    <Shell>
      <Global />
      <TitleBar>
        <QuickActions>
          <button aria-label="保存"><svg width="24" height="24" viewBox="0 0 24 24" fill="none" stroke="#e1dfdd" strokeWidth="1.8"><path d="M2 2H22V22H5L2 19ZM6 2V11H18V2M7 22V16H16V22M11 18V22" /></svg></button>
          <button aria-label="元に戻す"><svg width="24" height="24" viewBox="0 0 24 24" fill="none" stroke="#797775" strokeWidth="1.6"><path d="M3 2V10H11M3 10C8 1 14 1 18 4C22 8 21 13 17 16L10 23" /></svg></button>
          <button aria-label="やり直し"><svg width="24" height="24" viewBox="0 0 24 24" fill="none" stroke="#797775" strokeWidth="1.6"><path d="M21 2V10H13M21 10C16 1 10 1 6 4C2 8 3 13 7 16L14 23" /></svg></button>
        </QuickActions>
        <TitleText>test_map - Power BI Desktop</TitleText>
        <WindowArea>
          <UserName>Tetsuo Asahi</UserName>
          <svg width="24" height="24" viewBox="0 0 24 24"><clipPath id="face"><circle cx="12" cy="12" r="12" /></clipPath><g clipPath="url(#face)"><rect width="24" height="24" fill="#d5dcd6" /><path d="M3 24Q4 18 12 18T21 24Z" fill="#26262b" /><path d="M9 18H15L12 24Z" fill="#fff" /><ellipse cx="12" cy="12" rx="5.5" ry="8" fill="#b4684c" /><path d="M6 11Q4 2 12 2T18 11L17 7Q12 5 7 7Z" fill="#1d1714" /><path d="M8 11H11M13 11H16M10 16H14" stroke="#6b3527" strokeWidth="1" /></g></svg>
          <WinButtons>
            <WinButton aria-label="最小化"><svg width="16" height="16" stroke="#fff" strokeWidth="1.5"><path d="M0 8H16" /></svg></WinButton>
            <WinButton aria-label="元に戻す (縮小)"><svg width="16" height="16" fill="none" stroke="#fff" strokeWidth="1.5"><path d="M1 4H12V15H1ZM4 4V1H15V12H12" /></svg></WinButton>
            <WinButton aria-label="閉じる"><svg width="16" height="16" stroke="#fff" strokeWidth="1.5"><path d="M1 1 15 15M15 1 1 15" /></svg></WinButton>
          </WinButtons>
        </WindowArea>
      </TitleBar>

      <TabBar>{tabs.map(([t, w, tone]) => <RibbonTab key={t} $w={w} $tone={tone}><span>{t}</span></RibbonTab>)}</TabBar>

      <Ribbon>
        <Group $w={338}>
          <FieldRows $pl={18} $cols="28px 80px 195px">
            <svg width="22" height="22" viewBox="0 0 22 22" fill="none" stroke="#3b3a39" strokeWidth="1.7"><path d="M1 12 11 1H20V9L10 21ZM5 12 11 6M7.5 14.5 14 8M10 16 15 11" /><circle cx="17" cy="4" r=".8" /></svg>
            <FieldLabel htmlFor="name">名前</FieldLabel>
            <TextBox id="name" defaultValue="市区町村住所" />
            <svg width="23" height="24" viewBox="0 0 23 24" fill="none"><path d="M4 15A7.5 7.5 0 1 1 15 11" stroke="#2b88c8" strokeWidth="1.8" /><path d="M8.5 4V9H12" stroke="#3b3a39" strokeWidth="1.5" /><text x="4" y="23" fontSize="12" fontWeight="600" fill="#252423">123</text></svg>
            <FieldLabel htmlFor="type">データ型</FieldLabel>
            <SelectWrap><SelectBox id="type"><option>テキスト</option></SelectBox><Chev /></SelectWrap>
          </FieldRows>
          <GroupLabel>構造体</GroupLabel>
        </Group>
        <Group $w={331}>
          <FieldRows $pl={16} $cols="31px 42px 195px">
            <svg width="25" height="26" viewBox="0 0 25 26"><text x="0" y="14" fontSize="14" fontWeight="700" fill="#3b3a39">$%</text><path d="M11 24 13 18 21 10 24 13 16 21Z" fill="#4da0dc" stroke="#1b75b8" /></svg>
            <FieldLabel htmlFor="format" $off>書式</FieldLabel>
            <SelectWrap><SelectBox id="format" disabled><option>テキスト</option></SelectBox><Chev c="#979593" /></SelectWrap>
            <FormatTools>
              <button aria-label="通貨">$</button>
              <Chev c="#979593" w={9} />
              <button aria-label="パーセント">%</button>
              <svg width="12" height="20" viewBox="0 0 12 20" fill="#979593"><circle cx="5.5" cy="5.5" r="5.5" /><path d="M11 5Q12 14 3 20L1 18Q7 13 6 8Z" /></svg>
              <svg width="25" height="26" viewBox="0 0 25 26"><text x="5" y="11" fontSize="13" fill="#979593">.00</text><text x="13" y="25" fontSize="13" fill="#979593">.0</text><path d="M0 18H12M8 14 12 18 8 22" fill="none" stroke="#8fc1e3" strokeWidth="2" /></svg>
              <SpinWrap>
                <TextBox aria-label="小数点以下の桁数" disabled defaultValue="自動" />
                <svg width="10" height="24" viewBox="0 0 10 24" fill="none" stroke="#979593" strokeWidth="2"><path d="M1 6 5 1 9 6M1 18 5 23 9 18" /></svg>
              </SpinWrap>
            </FormatTools>
          </FieldRows>
          <GroupLabel>書式設定</GroupLabel>
        </Group>
        <Group $w={395}>
          <FieldRows $pl={20} $cols="26px 138px 195px">
            <svg width="18" height="22" viewBox="0 0 18 22" fill="none" stroke="#3b3a39" strokeWidth="2"><path d="M17 4V1H1L9 10 1 20H17V17" /></svg>
            <FieldLabel htmlFor="sum">概要</FieldLabel>
            <SelectWrap><SelectBox id="sum"><option>集計しない</option></SelectBox><Chev /></SelectWrap>
            <svg width="18" height="22" viewBox="0 0 18 22" fill="none" stroke="#3b3a39" strokeWidth="1.7"><path d="M1 1H17V21H1ZM1 11H17M6 5V7H12V5M6 15V17H12V15" /></svg>
            <FieldLabel htmlFor="cat">データ カテゴリ</FieldLabel>
            <SelectWrap><SelectBox id="cat" $marked><option>場所</option></SelectBox><Chev /></SelectWrap>
          </FieldRows>
          <GroupLabel>プロパティ</GroupLabel>
        </Group>
        <Group $w={129}>
          <BigButton>
            <svg width="42" height="44" viewBox="0 0 42 44"><rect x="1" y="5" width="40" height="33" fill="#fafafa" /><rect x="14" y="5" width="14" height="33" fill="#c8c6c4" /><path d="M1 5H41V38H1ZM1 16H41M1 27H41M14 5V38M28 5V38" fill="none" stroke="#605e5c" strokeWidth="1.7" /><path d="M22 18H46V44H22Z" fill="#f3f2f1" /><path d="M28 44V20M22 26 28 20 34 26M39 20V44M33 38 39 44 45 38" fill="none" stroke="#2b88c8" strokeWidth="2" /></svg>
            列で並べ替え<Chev />
          </BigButton>
          <GroupLabel>並べ替え</GroupLabel>
        </Group>
        <Group $w={104}>
          <BigButton>
            <svg width="44" height="44" viewBox="0 0 44 44" fill="none" strokeWidth="2"><path d="M19 3H8V14M8 29V40H19" stroke="#797775" /><rect x="1" y="15" width="13" height="13" stroke="#3b3a39" fill="#fff" /><path d="M4 21.5H11M7.5 18V25" stroke="#2b88c8" /><path d="M21 3H42V40H21ZM21 15H42M21 28H42" stroke="#3b3a39" fill="#fff" /><path d="M25 9H38M25 21.5H38M25 34H38" stroke="#2b88c8" /></svg>
            データ<InlineRow>グループ<Chev w={9} /></InlineRow>
          </BigButton>
          <GroupLabel>グループ</GroupLabel>
        </Group>
        <Group $w={197}>
          <BigButton $off disabled>
            <svg width="44" height="44" viewBox="0 0 44 44" fill="none" stroke="#b3b0ad" strokeWidth="1.8"><path d="M1 14H18V31H1ZM25 2H42V19H25ZM25 26H42V43H25ZM18 22 25 14M18 22 25 30M5 20H14M5 25H14M29 8H38M29 13H38M29 32H38M29 37H38" /></svg>
            リレーションシップの管理
          </BigButton>
          <GroupLabel>リレーションシップ</GroupLabel>
        </Group>
        <Group $w={95}>
          <BigButton>
            <svg width="44" height="44" viewBox="0 0 44 44"><rect x="1" y="6" width="42" height="33" fill="#fafafa" /><rect x="1" y="6" width="14" height="33" fill="#83bdec" /><path d="M15 17H43M15 28H43M29 6V39" stroke="#8a8886" strokeWidth="2" /><path d="M1 17H15M1 28H15M15 6V39" stroke="#106ebe" strokeWidth="2" /><path d="M1 6H43V39H1Z" fill="none" stroke="#3b3a39" strokeWidth="2" /></svg>
            新しい列
          </BigButton>
          <GroupLabel>計算</GroupLabel>
        </Group>
        <Collapse aria-label="リボンを折りたたむ"><Chev d="up" w={13} s={3} /></Collapse>
      </Ribbon>

      <Body>
        <SideNav>
          <SideButton $on aria-label="レポート"><svg width="26" height="24" viewBox="0 0 26 24" fill="none" stroke="#252423" strokeWidth="1.8"><path d="M3 2V22H24M7 6H10V18H7ZM13 10H16V18H13ZM20 4H23V18H20Z" /></svg></SideButton>
          <SideButton aria-label="データ"><svg width="28" height="24" viewBox="0 0 28 24" fill="none" stroke="#797775" strokeWidth="1.6"><path d="M3 1H26V22H3ZM3 4H26M3 10H26M3 16H26M10 4V22M18 4V22" /></svg></SideButton>
          <SideButton aria-label="モデル"><svg width="28" height="28" viewBox="0 0 28 28" fill="none" stroke="#797775" strokeWidth="1.7"><path d="M1 10H11V19H1ZM1 13H11M17 1H27V11H17ZM17 4H27M17 16H27V26H17ZM17 19H27M6 10V5H17M6 19V23H17" /></svg></SideButton>
        </SideNav>

        <Center>
          <CanvasRow>
            <ReportPage>
              <VisualTitle>市区町村住所</VisualTitle>
              <MapVisual>
                <MapArt />
                <ZoomStack>
                  <ZoomButton aria-label="拡大"><svg width="16" height="16" stroke="#252423" strokeWidth="1.6"><path d="M0 8H16M8 0V16" /></svg></ZoomButton>
                  <ZoomButton aria-label="縮小"><svg width="16" height="16" stroke="#252423" strokeWidth="1.6"><path d="M0 8H16" /></svg></ZoomButton>
                </ZoomStack>
                <VisualHeader>
                  <HeaderButton aria-label="フィルター"><svg width="24" height="22" viewBox="0 0 24 22" fill="none" stroke="#605e5c" strokeWidth="1.4"><path d="M1 1H23L15 10V21H10V10Z" /></svg></HeaderButton>
                  <HeaderButton aria-label="フォーカス モード"><svg width="22" height="20" viewBox="0 0 22 20" fill="none" stroke="#605e5c" strokeWidth="1.4"><path d="M9 3H1V18H21V11M1 11H9V18M11 10 20 1M14 1H20V7" /></svg></HeaderButton>
                  <HeaderButton aria-label="その他のオプション"><svg width="22" height="6" fill="#797775"><circle cx="2" cy="3" r="1.8" /><circle cx="11" cy="3" r="1.8" /><circle cx="20" cy="3" r="1.8" /></svg></HeaderButton>
                </VisualHeader>
              </MapVisual>
              <TableVisual>
                <DataTable>
                  <thead><tr><th>都道府県</th><th>市区町村住所</th></tr></thead>
                  <tbody>{tableRows.map(([a, b]) => <tr key={b}><td>{a}</td><td>{b}</td></tr>)}</tbody>
                </DataTable>
                <Handle $v="top" $h="left" /><Handle $v="top" $h="mid" /><Handle $v="top" $h="right" />
                <Handle $v="mid" $h="left" /><Handle $v="mid" $h="right" />
                <Handle $v="bottom" $h="left" /><Handle $v="bottom" $h="mid" /><Handle $v="bottom" $h="right" />
              </TableVisual>
            </ReportPage>
            <FilterPane>
              <button aria-label="展開"><Chev d="left" w={17} s={1.3} /></button>
              <FilterBody>
                <svg width="18" height="20" viewBox="0 0 18 20" fill="none" stroke="#3b3a39" strokeWidth="1.2"><path d="M17 1V19L9 12H1V8H9Z" /></svg>
                <FilterTitle>フィルター</FilterTitle>
              </FilterBody>
            </FilterPane>
          </CanvasRow>
          <PageTabs>
            <PageArrows>
              <svg width="7" height="13" fill="#c2c0be"><path d="M7 0V13L0 6.5Z" /></svg>
              <svg width="7" height="13" fill="#c2c0be"><path d="M0 0V13L7 6.5Z" /></svg>
            </PageArrows>
            <PageTab>ページ 1</PageTab>
            <AddPage aria-label="新しいページ"><svg width="17" height="17" fill="#797775"><path d="M6 0H11V6H17V11H11V17H6V11H0V6H6Z" /></svg></AddPage>
          </PageTabs>
        </Center>

        <Pane $w={273}>
          <PaneHead><PaneTitle>視覚化</PaneTitle><button aria-label="折りたたむ"><Chev d="right" w={17} s={1.3} /></button></PaneHead>
          <VizGrid>
            {gallery.map(([name, art]) => <VizButton key={name} aria-label={name}><svg width="28" height="28" viewBox="0 0 84 84">{art}</svg></VizButton>)}
          </VizGrid>
          <BuildTabs>
            <BuildTab $on aria-label="フィールド"><svg width="30" height="30" viewBox="0 0 30 30" fill="none" stroke="#252423" strokeWidth="1.5"><path d="M0 1H24" /><path d="M1 5H29V14H1ZM1 19H29V28H1Z" strokeDasharray="3 1.5" /></svg></BuildTab>
            <BuildTab aria-label="書式"><svg width="30" height="30" viewBox="0 0 30 30" fill="none" stroke="#252423" strokeWidth="1.5"><path d="M2 1H24V7H2ZM24 4H28V11H14V15M11 15H17V29H11Z" /></svg></BuildTab>
            <BuildTab aria-label="分析"><svg width="32" height="30" viewBox="0 0 32 30" fill="none" stroke="#252423" strokeWidth="1.5"><circle cx="14" cy="13" r="12" /><path d="M2 14 7 11 12 14 23 7M7 17V22M12 17V25M16 15V25M21 13V22M23 21 31 29" /></svg></BuildTab>
          </BuildTabs>
          <WellLabel>値</WellLabel>
          <Well>
            <WellBox>
              <WellItem><span>都道府県 階層</span><Chev w={20} s={1.2} /><button aria-label="都道府県 階層を削除"><Cross /></button></WellItem>
              <WellItem $sub><span>都道府県</span><button aria-label="都道府県を削除"><Cross /></button></WellItem>
              <WellItem $sub><span>市区町村住所</span><button aria-label="市区町村住所を削除"><Cross /></button></WellItem>
            </WellBox>
          </Well>
          <DrillTitle>ドリルスルー</DrillTitle>
          <PaneText>クロス レポート</PaneText>
          <ToggleRow>オフ<Toggle type="checkbox" /></ToggleRow>
          <PaneText>すべてのフィルターを保持...</PaneText>
          <ToggleRow>オン<Toggle type="checkbox" defaultChecked /></ToggleRow>
          <ScrollThumb />
        </Pane>

        <Pane $w={271}>
          <PaneHead><PaneTitle>フィールド</PaneTitle><button aria-label="折りたたむ"><Chev d="right" w={17} s={1.3} /></button></PaneHead>
          <SearchWrap><Magnifier /><SearchInput placeholder="検索" aria-label="検索" /></SearchWrap>
          <Tree>
            <TableRow>
              <Chev d="up" w={18} s={1.2} />
              <svg width="29" height="30" viewBox="0 0 29 30"><path d="M1 1H20V19H1Z" fill="#fff" stroke="#252423" strokeWidth="1.6" /><path d="M1 1H20V5H1Z" fill="#252423" /><path d="M1 10H20M1 14.5H20M7 4V19M14 4V19" stroke="#252423" strokeWidth="1.5" /><circle cx="20" cy="20" r="9" fill="#f2c811" /><path d="M16.5 20 19 22.5 23.5 18" fill="none" stroke="#252423" strokeWidth="2" /></svg>
              <span>テーブル</span>
            </TableRow>
            <FieldRow $level={0} $on><Check type="checkbox" /><Globe /><span>市区町村住所</span></FieldRow>
            <FieldRow $level={0}><Check type="checkbox" /><Globe /><span>都道府県</span></FieldRow>
            <FieldRow $level={0} $bold>
              <Chev d="up" w={18} s={1.2} /><Check type="checkbox" defaultChecked />
              <svg width="18" height="18" viewBox="0 0 18 18"><path d="M1 1H6V5H1ZM10 7H15V11H10Z" fill="#f2c811" stroke="#252423" strokeWidth="1.6" /><path d="M5 8V12M3 10H8M5 15V20M3 17.5H8" stroke="#252423" strokeWidth="1.6" /><circle cx="18" cy="19" r="9" fill="#f2c811" /><path d="M14.5 19 17 21.5 21.5 17" fill="none" stroke="#252423" strokeWidth="2" /></svg>
              <span>都道府県 ...</span>
            </FieldRow>
            <FieldRow $level={1}><Check type="checkbox" defaultChecked /><Globe /><span>都道府県</span></FieldRow>
            <FieldRow $level={1}><Check type="checkbox" defaultChecked /><Globe /><span>市区町村...</span></FieldRow>
          </Tree>
        </Pane>
      </Body>

      <StatusBar>1/1 ページ</StatusBar>

      <Taskbar>
        <StartButton aria-label="スタート"><svg width="24" height="24" viewBox="0 0 24 24" fill="#fff"><path d="M0 3.5 11 2V11.5H0ZM12 1.8 24 0V11.5H12ZM0 12.5H11V22L0 20.5ZM12 12.5H24V24L12 22.2Z" /></svg></StartButton>
        <TaskSearch><Magnifier /><SearchInput placeholder="ここに入力して検索" aria-label="ここに入力して検索" /></TaskSearch>
        <TaskButton aria-label="Cortana"><svg width="26" height="26"><circle cx="13" cy="13" r="10.5" fill="none" stroke="#fff" strokeWidth="3" /></svg></TaskButton>
        <TaskButton aria-label="タスク ビュー"><svg width="26" height="24" viewBox="0 0 26 24" fill="none" stroke="#fff" strokeWidth="1.5"><path d="M1 0V3H17V0M1 7H17V17H1ZM1 24V21H17V24M24 0V5M24 12V24M22 8.5H26" /></svg></TaskButton>
        <TaskButton $open $gap aria-label="Microsoft Edge">
          <svg width="36" height="36" viewBox="0 0 36 36"><defs><linearGradient id="eg" x1="0" x2="1"><stop offset="0" stopColor="#1f9de0" /><stop offset=".6" stopColor="#35c5c0" /><stop offset="1" stopColor="#62e04c" /></linearGradient></defs><circle cx="18" cy="18" r="18" fill="#0f6fc9" /><path d="M0 17C1 7 9 0 18 0C29 0 36 7 36 15C36 21 32 24 27 24C22 24 22 21 23 19C24 15 21 10 13 10C6 10 1 14 0 17Z" fill="url(#eg)" /><path d="M12 18C10 26 17 33 26 33C22 36 16 37 11 34C5 30 6 20 12 18Z" fill="#1488d8" /><path d="M17 17C15 22 19 28 27 28C30 28 32 27 34 25C32 32 26 36 20 36C12 33 10 22 17 17Z" fill="#123f8f" /><path d="M23 18C22 21 22 24 27 24L34 23 36 20V26L34 25C32 27 30 28 27 28C20 28 16 22 18 17Z" fill="#26343a" /></svg>
        </TaskButton>
        <TaskButton $open aria-label="エクスプローラー"><svg width="34" height="30" viewBox="0 0 34 30"><path d="M0 1H12L15 5H33V28H0Z" fill="#f5c243" /><path d="M1 1H12V5H1Z" fill="#dc9a12" /><path d="M0 8H33V28H0Z" fill="#fcd866" /><path d="M6 28V17Q6 15 8 15H25Q27 15 27 17V28H22V22H11V28Z" fill="#3a92dc" /></svg></TaskButton>
        <TaskButton $open aria-label="Teams"><svg width="36" height="36" viewBox="0 0 36 36"><circle cx="20" cy="5" r="5" fill="#7b83eb" /><circle cx="30" cy="8" r="4" fill="#5059c9" /><path d="M14 12H27V27Q26 33 20 33Q15 32 14 27Z" fill="#7b83eb" /><path d="M27 13H35V24Q33 29 28 28Z" fill="#5059c9" /><rect x="0" y="8" width="18" height="18" rx="1" fill="#4b53bc" /><path d="M5 13H13M9 13V22" stroke="#fff" strokeWidth="2.5" /><circle cx="29" cy="28" r="8" fill="#6bb700" stroke="#fff" strokeWidth="1.5" /><path d="M25 28 28 31 33 25" fill="none" stroke="#fff" strokeWidth="2" /></svg></TaskButton>
        <TaskButton aria-label="ターミナル"><svg width="36" height="36" viewBox="0 0 36 36"><rect x="2" y="2" width="32" height="27" fill="#06272f" stroke="#5f8b95" strokeWidth="2" /><path d="M25 8H11V23H25M11 15.5H23" fill="none" stroke="#f0e9d6" strokeWidth="2.6" /><path d="M12 34H24" stroke="#5f8b95" strokeWidth="2" /></svg></TaskButton>
        <TaskButton $open aria-label="Outlook"><svg width="36" height="34" viewBox="0 0 36 34"><path d="M9 1H34V24H9Z" fill="#1490df" /><path d="M18 1H26V9H18Z" fill="#28a8ea" /><path d="M26 1H34V9H26Z" fill="#50d9ff" /><path d="M26 9H34V17H26Z" fill="#28a8ea" /><path d="M9 33V18L22 26 36 16V33Z" fill="#1a8fe0" /><path d="M10 33 36 17V33Z" fill="#50b8f2" /><rect x="0" y="7" width="19" height="19" rx="1" fill="#0f5fb8" /><circle cx="9.5" cy="16.5" r="4.5" fill="none" stroke="#fff" strokeWidth="2.5" /></svg></TaskButton>
        <TaskButton aria-label="Edge レガシー"><svg width="32" height="34" viewBox="0 0 32 34" fill="#0078d7"><path d="M1 16C2 6 9 1 17 1C26 1 31 8 31 15V19H11C12 25 18 28 22 28C25 28 28 27 30 26V31C27 33 23 34 19 34C9 34 4 27 5 19C5 14 9 11 13 9C12 10 11 12 11 14H22C22 9 19 7 15 7C9 7 4 11 1 16Z" /></svg></TaskButton>
        <TaskButton $open aria-label="付箋"><svg width="28" height="28" viewBox="0 0 28 28"><path d="M0 0H28V28H0Z" fill="#ffe600" /><path d="M28 15V28H15V26Z" fill="#232b30" /><path d="M15 15H28L15 28Z" fill="#454022" /></svg></TaskButton>
        <TaskButton $open aria-label="Chrome"><svg width="34" height="34" viewBox="0 0 34 34"><circle cx="17" cy="17" r="16.5" fill="#fdd04a" /><path d="M17 17 3 8A16.5 16.5 0 0 1 31.5 9H17Z" fill="#de5246" /><path d="M17 17 10 21 3 8A16.5 16.5 0 0 0 17 33.5L24 21Z" fill="#2aa35a" /><path d="M17 9H31.5A16.5 16.5 0 0 1 17 33.5L24 21Z" fill="#fdd04a" /><circle cx="17" cy="17" r="8" fill="#fff" /><circle cx="17" cy="17" r="6.3" fill="#4a84ee" /></svg></TaskButton>
        <TaskButton $active aria-label="Power BI Desktop"><svg width="36" height="36" viewBox="0 0 36 36"><rect width="36" height="36" fill="#f2c811" /><path d="M8 25H6V10Q6 9 8 9H28Q30 9 30 11V24H29" fill="none" stroke="#252423" strokeWidth="2" /><path d="M11 22V27M16 18V27M21 20V27M26 14V27" stroke="#252423" strokeWidth="3" strokeLinecap="round" /></svg></TaskButton>
        <Tray>
          <TrayButton $w={48} aria-label="隠れているインジケーター"><Chev d="up" w={18} c="#fff" s={1.5} /></TrayButton>
          <TrayButton $w={48} aria-label="OneDrive"><svg width="26" height="18" viewBox="0 0 26 18"><path d="M5 17Q0 16 1 11Q2 7 6 7Q8 1 14 1Q19 1 21 7Q26 8 25 13Q24 17 20 17Z" fill="#1a87d9" /><path d="M5 17 15 9 24 15Q23 17 20 17Z" fill="#35b0ef" /></svg></TrayButton>
          <TrayButton $w={48} aria-label="音量"><svg width="24" height="20" viewBox="0 0 24 20" fill="none" stroke="#fff" strokeWidth="1.4"><path d="M1 7H5L10 2V18L5 13H1ZM13 7Q15 10 13 13M16 4.5Q20 10 16 15.5" /><path d="M19 2Q25 10 19 18" stroke="#8b9499" /></svg></TrayButton>
          <TrayButton $w={49} aria-label="バッテリー"><svg width="26" height="18" viewBox="0 0 26 18" fill="none" stroke="#fff" strokeWidth="1.5"><path d="M8 4H23V15H6V10M23 7H25V12H23" /><path d="M10 6H21V13H8V9Z" fill="#fff" /><path d="M1 3H8V7L6 9H3L1 7ZM3 0V3M6 0V3M4.5 9V13H6" /></svg></TrayButton>
          <TrayButton $w={49} aria-label="ネットワーク"><svg width="20" height="20" viewBox="0 0 20 20" fill="none" stroke="#fff" strokeWidth="1.5"><path d="M1 19A18 18 0 0 1 19 1M6 19A13 13 0 0 1 19 6M11 19A8 8 0 0 1 19 11" /><circle cx="17" cy="17" r="1.5" fill="#fff" /></svg></TrayButton>
          <TrayButton $w={30} aria-label="IME 英数"><svg width="18" height="24" viewBox="0 0 18 24" fill="none" stroke="#fff" strokeWidth="1.5"><path d="M1 23 9 1 17 23M4 15H14" /></svg></TrayButton>
          <TrayButton $w={57} aria-label="IME"><svg width="22" height="22" viewBox="0 0 22 22"><rect width="22" height="22" fill="#fff" /><circle cx="11" cy="11" r="9" fill="#111" /><path d="M13 5V12Q13 16 9 16" fill="none" stroke="#fff" strokeWidth="2" /></svg></TrayButton>
          <Clock>15:43<br />2020/04/03</Clock>
          <TrayButton $w={63} aria-label="通知"><svg width="24" height="24" viewBox="0 0 24 24" fill="none" stroke="#fff" strokeWidth="1.5"><path d="M1 1H23V18H16L12 23 8 18H1Z" /></svg></TrayButton>
          <Edge />
        </Tray>
      </Taskbar>
      <SnipHint>全画面領域切り取り(S)</SnipHint>
    </Shell>
  );
}
